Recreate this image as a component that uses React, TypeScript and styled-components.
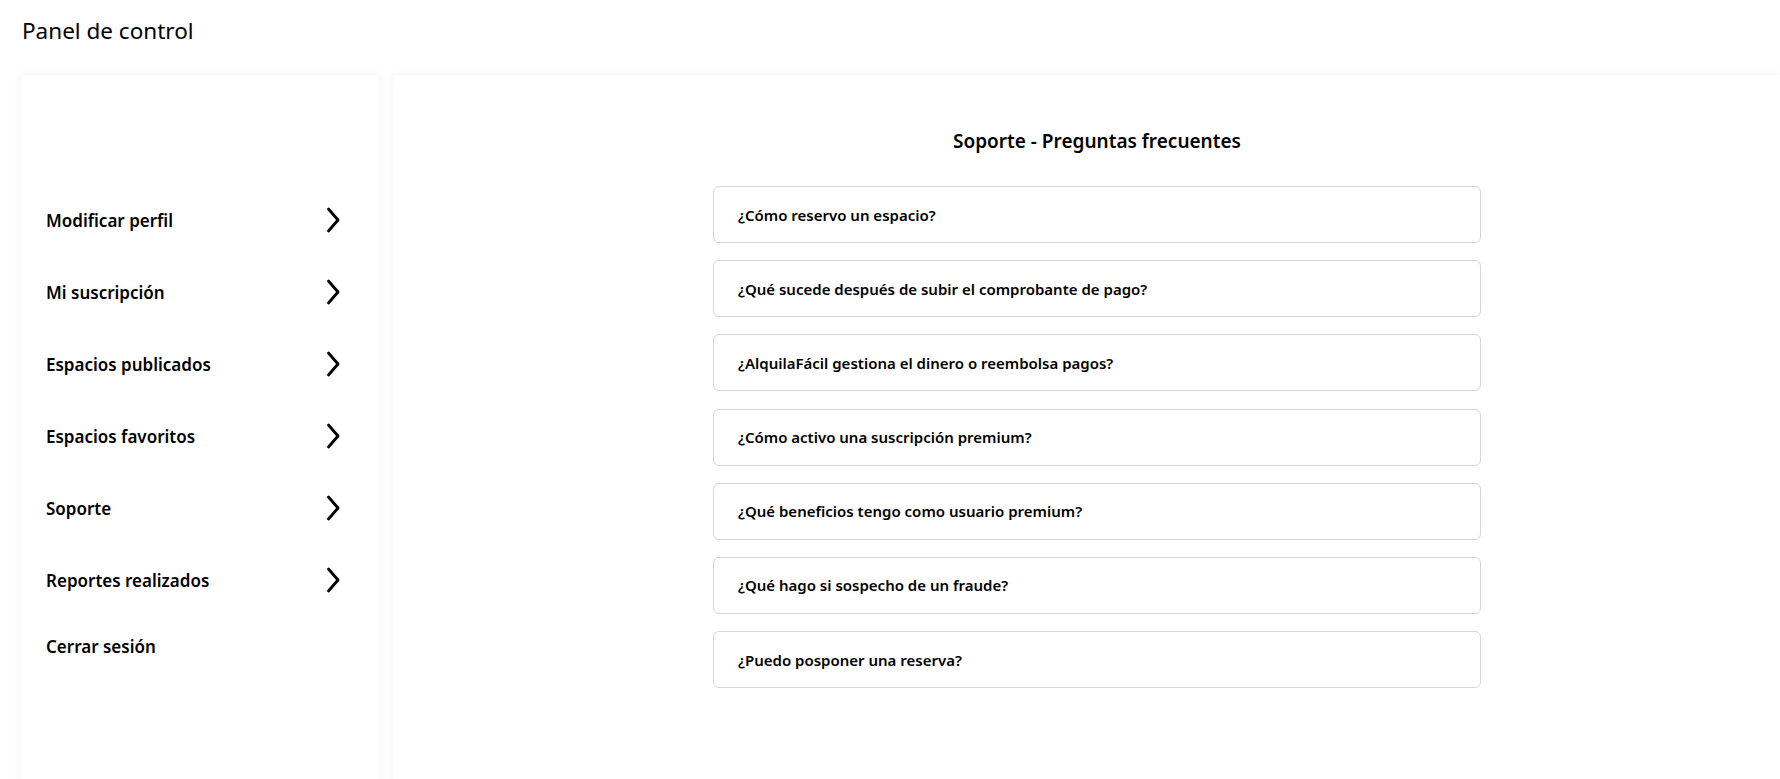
import React from "react";
import styled, { createGlobalStyle } from "styled-components";

const GlobalStyle = createGlobalStyle`
  html, body {
    margin: 0;
    padding: 0;
    background: #ffffff;
    font-family: "Noto Sans", "Open Sans", Arial, sans-serif;
    color: #000000;
    overflow: hidden;
  }
`;

const Page = styled.div`
  padding: 0 0 0 22px;
  box-sizing: border-box;
`;

const Header = styled.header`
  height: 75px;
  display: flex;
  align-items: flex-start;
`;

const PageTitle = styled.h1`
  margin: 15px 0 0 0;
  font-size: 22.5px;
  font-weight: 400;
  line-height: 32px;
`;

const Panels = styled.div`
  display: flex;
  gap: 16px;
  align-items: stretch;
`;

const Sidebar = styled.nav`
  width: 356px;
  flex: none;
  min-height: 760px;
  background: #ffffff;
  box-shadow: 0 0 10px rgba(0, 0, 0, 0.06);
  padding: 109px 37px 0 24px;
  box-sizing: border-box;
  display: flex;
  flex-direction: column;
`;

const NavItem = styled.div`
  display: flex;
  align-items: center;
  justify-content: space-between;
  padding: 21px 0;
  min-height: 30px;
  font-size: 17px;
  font-weight: 600;
  cursor: pointer;
`;

const LogoutItem = styled(NavItem)`
  min-height: 24px;
  padding-top: 18px;
`;

const Main = styled.main`
  flex: 1;
  min-height: 760px;
  background: #ffffff;
  box-shadow: 0 0 10px rgba(0, 0, 0, 0.06);
  padding: 0 0 0 20px;
  display: flex;
  flex-direction: column;
  align-items: center;
`;

const SectionTitle = styled.h2`
  margin: 53px 0 0 0;
  font-size: 19px;
  font-weight: 600;
  line-height: 26px;
`;

const FaqList = styled.div`
  margin-top: 32px;
  width: 768px;
  display: flex;
  flex-direction: column;
  gap: 17.2px;
`;

const FaqCard = styled.div`
  height: 57px;
  box-sizing: border-box;
  border: 1px solid #d4d5da;
  border-radius: 6px;
  padding: 0 24px;
  display: flex;
  align-items: center;
  font-size: 15px;
  font-weight: 600;
  cursor: pointer;
`;

const Chevron = () => (
  <svg width="16" height="26" viewBox="0 0 16 26" fill="none">
    <path
      d="M3.5 2 L13 13 L3.5 24"
      stroke="#000"
      strokeWidth="2.8"
      strokeLinecap="round"
      strokeLinejoin="round"
    />
  </svg>
);

const navItems = [
  "Modificar perfil",
  "Mi suscripción",
  "Espacios publicados",
  "Espacios favoritos",
  "Soporte",
  "Reportes realizados",
];

const faqs = [
  "¿Cómo reservo un espacio?",
  "¿Qué sucede después de subir el comprobante de pago?",
  "¿AlquilaFácil gestiona el dinero o reembolsa pagos?",
  "¿Cómo activo una suscripción premium?",
  "¿Qué beneficios tengo como usuario premium?",
  "¿Qué hago si sospecho de un fraude?",
  "¿Puedo posponer una reserva?",
];

export default function App() {
  return (
    <>
      <GlobalStyle />
      <Page>
        <Header>
          <PageTitle>Panel de control</PageTitle>
        </Header>
        <Panels>
          <Sidebar>
            {navItems.map((item) => (
              <NavItem key={item}>
                <span>{item}</span>
                <Chevron />
              </NavItem>
            ))}
            <LogoutItem>
              <span>Cerrar sesión</span>
            </LogoutItem>
          </Sidebar>
          <Main>
            <SectionTitle>Soporte - Preguntas frecuentes</SectionTitle>
            <FaqList>
              {faqs.map((q) => (
                <FaqCard key={q}>{q}</FaqCard>
              ))}
            </FaqList>
          </Main>
        </Panels>
      </Page>
    </>
  );
}
